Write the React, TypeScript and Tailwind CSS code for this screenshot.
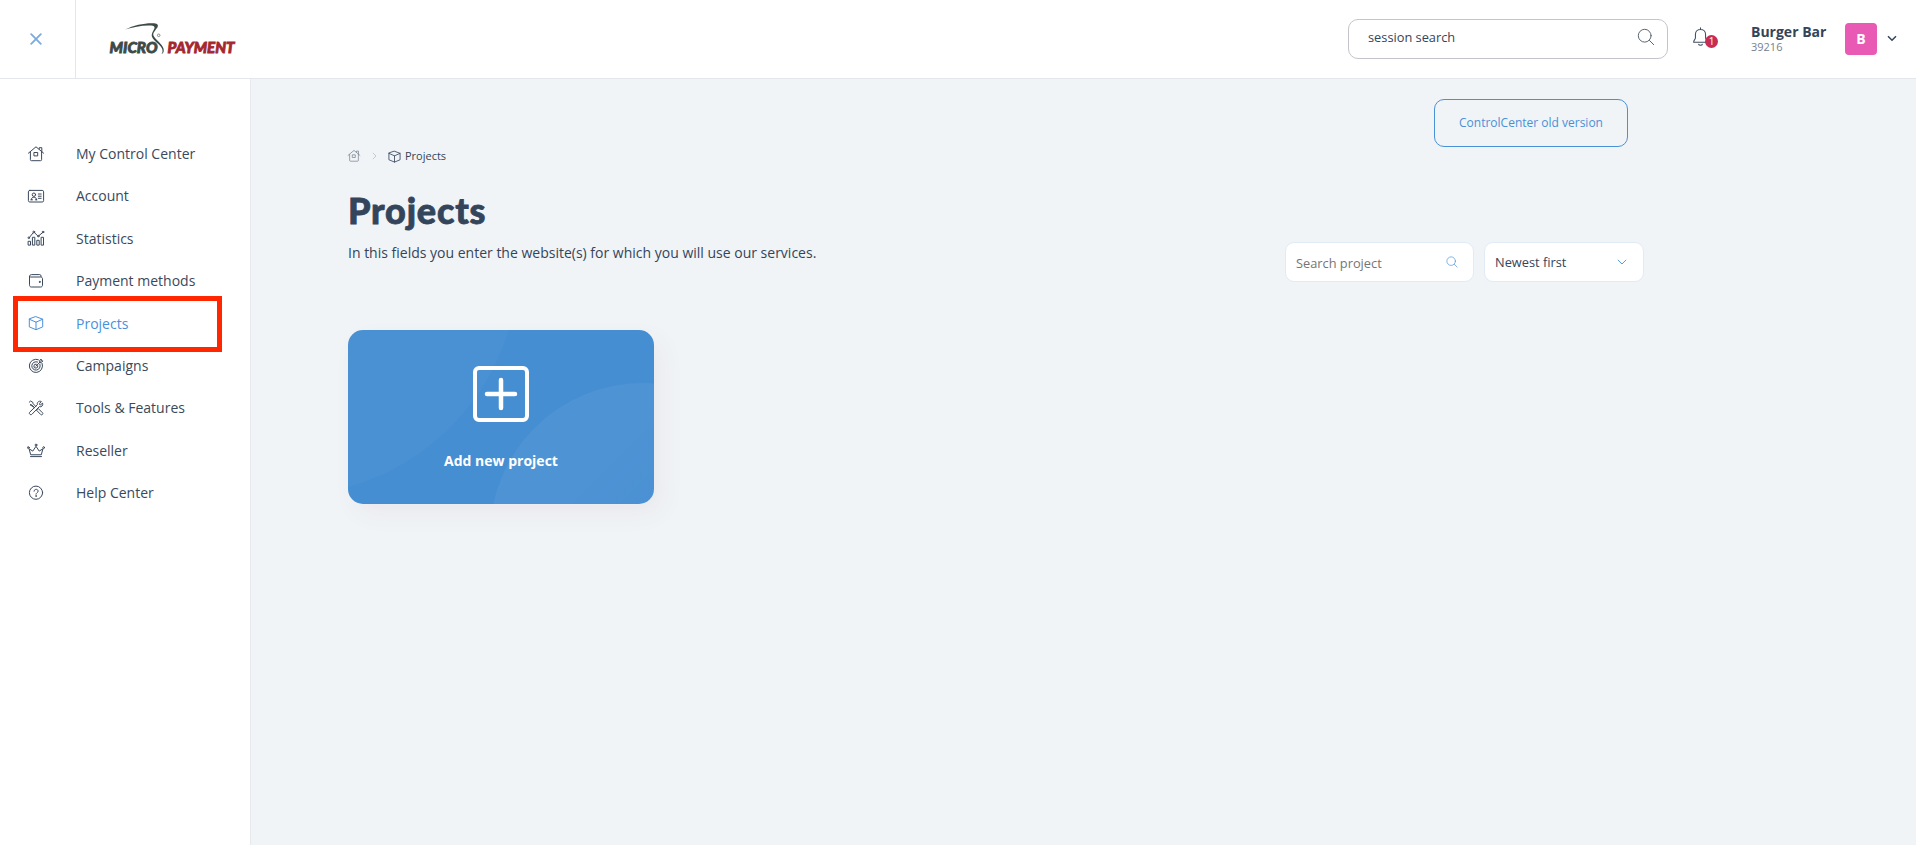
import type { ReactNode } from 'react'

interface IconProps {
  className?: string
  size?: number
  children?: ReactNode
}

interface NavItem {
  label: string
  icon: (props: IconProps) => ReactNode
  active?: boolean
}

function Icon({ className = '', size = 18, children }: IconProps) {
  return (
    <svg
      width={size}
      height={size}
      viewBox="0 0 18 18"
      fill="none"
      stroke="currentColor"
      strokeWidth={1}
      strokeLinecap="round"
      strokeLinejoin="round"
      className={`shrink-0 ${className}`}
    >
      {children}
    </svg>
  )
}

function HomeIcon(props: IconProps) {
  return (
    <Icon {...props}>
      <path d="M1.4 8.2 9 1.8l7.6 6.4" />
      <path d="M3.4 7v7.7a1 1 0 0 0 1 1h9.2a1 1 0 0 0 1-1V7" />
      <path d="M12.2 4V2.700h2.600v4" />
      <rect x="7.3" y="7.5" width="3.4" height="3.4" />
    </Icon>
  )
}

function AccountIcon(props: IconProps) {
  return (
    <Icon {...props}>
      <rect x="1.4" y="3.4" width="15.2" height="11.6" rx="1.4" />
      <circle cx="6.9" cy="7.7" r="1.7" />
      <path d="M4.2 12.8c.2-1.8 1.2-2.6 2.7-2.6s2.5.8 2.7 2.6M4 12.8h1.5M8.3 12.8h1.5" />
      <path d="M11.3 7h2.9M11.3 9.2h2.9M11.3 11.3h2.9" />
    </Icon>
  )
}

function StatisticsIcon(props: IconProps) {
  return (
    <Icon {...props}>
      <path d="M1.5 12.3h2v3.8h-2zM5.8 8.3h2v7.8h-2zM10.2 11.3h2v4.8h-2zM14.5 8.3h2v7.8h-2z" />
      <path d="m2.4 8.4 3.8-4.6M7.6 3.8l3 2.9M12 6.6l3.6-3" />
      <circle cx="1.8" cy="8.8" r=".8" />
      <circle cx="6.8" cy="3" r=".9" />
      <circle cx="11.3" cy="7.1" r=".8" />
      <circle cx="16" cy="3" r=".8" />
    </Icon>
  )
}

function WalletIcon(props: IconProps) {
  return (
    <Icon {...props}>
      <path d="M2.5 4.6c0-1.2.8-2 2-2h8.2c.8 0 1.3.5 1.3 1.3v.6" />
      <path d="M2.5 4.3c0 .5.4.7 1 .7h10.2c1.1 0 1.8.7 1.8 1.8v6.400c0 1.100-.7 1.800-1.800 1.800H4.300c-1.100 0-1.800-.7-1.800-1.800z" />
      <circle cx="12.7" cy="9.9" r=".5" fill="currentColor" />
    </Icon>
  )
}

function CubeIcon(props: IconProps) {
  return (
    <Icon {...props}>
      <path d="M9 2.700 15.700 5.200v7.700L9 15.700l-6.700-2.800V5.200z" />
      <path d="M2.300 5.200 9 8.200l6.700-3M9 8.200v7.500" />
    </Icon>
  )
}

function TargetIcon(props: IconProps) {
  return (
    <Icon {...props}>
      <path d="M11.400 2.700a6.600 6.600 0 1 0 3.700 3.700" />
      <path d="M10.600 5a4.200 4.200 0 1 0 2.300 2.300" />
      <path d="M9.400 7.200a2 2 0 1 0 1.400 1.400" />
      <path d="m9 9.100 4.300-4.300M12.700 5.300V3.500L14.200 2v1.900h1.700l-1.500 1.500z" />
    </Icon>
  )
}

function ToolsIcon(props: IconProps) {
  return (
    <Icon {...props}>
      <path d="M2.200 3.300 3.500 2l2.300 1.300.3 1.400 2.600 2.600M7.400 8.500 4.700 5.900 3.400 5.700z" />
      <path d="m10.400 10.100.9-.5 4.200 4.200c1.100 1.100-.7 2.800-1.800 1.700l-4.100-4.200z" />
      <path d="M12.700 5.300v-1l1.600-1.800c-2.600-1-4.600 1-3.900 3.200l-7.700 7.500c-1.300 1.300.9 3.400 2.200 2.100l7.400-7.600c2.200.6 4.100-1.300 3.300-3.600l-1.800 1.500z" />
    </Icon>
  )
}

function CrownIcon(props: IconProps) {
  return (
    <Icon {...props}>
      <path d="M3.600 13.400 2.100 7.800l3.700 2.300L9 5.300l3.200 4.800 3.700-2.300-1.500 5.600z" />
      <path d="M3.500 15.600h11" />
      <circle cx="1.300" cy="6.600" r=".9" />
      <circle cx="9" cy="4" r=".9" />
      <circle cx="16.700" cy="6.600" r=".9" />
    </Icon>
  )
}

function HelpIcon(props: IconProps) {
  return (
    <Icon {...props}>
      <circle cx="9" cy="8.700" r="6.600" />
      <path d="M7 7.200c0-2.600 4.200-2.500 4.100 0 0 1.500-2.100 1.500-2.100 3" />
      <circle cx="9" cy="12" r=".3" fill="currentColor" />
    </Icon>
  )
}

function SearchIcon(props: IconProps) {
  return (
    <Icon {...props}>
      <circle cx="7.700" cy="7.700" r="6.400" />
      <path d="m12.400 12.400 4.300 4.300" />
    </Icon>
  )
}

function BellIcon(props: IconProps) {
  return (
    <Icon {...props}>
      <path d="M9 .8v1.300M4.200 7c0-6.200 9.600-6.200 9.600 0v3.300c0 1.700 1.700 1.800 1.700 4.200h-13c0-2.400 1.700-2.500 1.700-4.200z" />
      <path d="M7.200 16.300c.3 1.400 3.300 1.400 3.600 0" />
    </Icon>
  )
}

function Logo() {
  return (
    <svg width="128" height="34" viewBox="0 0 128 34" className="shrink-0">
      <path
        d="M16 7.500C25 3 36 .8 45 1.200c4 .3 4.800 2.300 3 4.800-2.200 3-4.700 5.400-3.300 8 2 3.600 8.800 8.500 9.800 12.500.6 2.800.2 4.700-2 5.600 1.300-1.600 1.400-3.600.5-5.600-1.700-4-8.600-7.500-10-11.700-1-3.200 1.300-5.600 2.400-8.400.7-2-.8-2.700-3.400-2.900C34 3 24.500 5 16 7.500z"
        fill="#3c4a48"
      />
      <circle cx="49.700" cy="13.300" r="1.300" fill="none" stroke="#6b7674" strokeWidth=".8" />
      <text x="0.500" y="31" textLength="48" lengthAdjust="spacingAndGlyphs" fill="#3c4a48" stroke="#3c4a48" strokeWidth=".8" className="font-['Lato'] text-[14.500px] font-black italic">
        MICRO
      </text>
      <text x="58.500" y="31" textLength="67" lengthAdjust="spacingAndGlyphs" fill="#a4272f" stroke="#a4272f" strokeWidth=".8" className="font-['Lato'] text-[14.500px] font-black italic">
        PAYMENT
      </text>
    </svg>
  )
}

const navItems: NavItem[] = [
  { label: 'My Control Center', icon: HomeIcon },
  { label: 'Account', icon: AccountIcon },
  { label: 'Statistics', icon: StatisticsIcon },
  { label: 'Payment methods', icon: WalletIcon },
  { label: 'Projects', icon: CubeIcon, active: true },
  { label: 'Campaigns', icon: TargetIcon },
  { label: 'Tools & Features', icon: ToolsIcon },
  { label: 'Reseller', icon: CrownIcon },
  { label: 'Help Center', icon: HelpIcon },
]

function Header() {
  return (
    <header className="flex h-[79px] shrink-0 items-center border-b border-[#e3e6eb] bg-white">
      <button className="flex h-full w-[76px] items-center justify-center border-r border-[#e3e6eb] pr-1 text-[#7aaadf]">
        <svg width="12" height="12" viewBox="0 0 12 12" stroke="currentColor" strokeWidth="1.8" strokeLinecap="round">
          <path d="m1.200 1.200 9.600 9.600M10.800 1.200 1.200 10.800" />
        </svg>
      </button>
      <div className="ml-[33px]">
        <Logo />
      </div>
      <div className="ml-auto flex h-10 w-80 items-center justify-between rounded-[10px] border border-[#c4c5cb] pr-3 pl-[19px] text-[12.8px]">
        <span className="pb-0.5">session search</span>
        <SearchIcon className="mb-1 text-[#5b6673]" />
      </div>
      <div className="relative ml-[23px] text-[#3f4e60]">
        <BellIcon size={19} className="mb-1.5" />
        <span className="absolute top-[8px] left-[14px] flex size-[13px] items-center justify-center rounded-full bg-[#c72c55] text-[10px] leading-none text-white">
          1
        </span>
      </div>
      <div className="ml-[41px] w-[94px] pb-0.5">
        <p className="text-[14px] leading-[17px] font-bold">Burger Bar</p>
        <p className="text-[11px] leading-[13px] text-[#77808c]">39216</p>
      </div>
      <div className="flex size-8 items-center justify-center rounded-[4px] bg-[#e95ab4] pb-0.5 text-[14px] font-bold text-white">B</div>
      <svg width="10" height="7" viewBox="0 0 10 7" fill="none" stroke="#34445a" strokeWidth="1.500" className="mr-[19px] mb-px ml-[10px]">
        <path d="m1 1.200 4 4 4-4" />
      </svg>
    </header>
  )
}

function Sidebar() {
  return (
    <nav className="w-[251px] shrink-0 border-r border-[#e6e9ee] bg-white pt-[53.400px]">
      {navItems.map(({ label, icon: NavIcon, active }) => (
        <a
          key={label}
          className={`relative flex h-[42.4px] items-center gap-[31px] pl-[27px] text-[14px] ${active ? 'text-[#4a90d9]' : 'text-[#3a495c]'}`}
        >
          {active && <span className="absolute top-[-6px] left-[13px] h-14 w-[209px] border-[5px] border-[#ff2600]" />}
          <NavIcon />
          {label}
        </a>
      ))}
    </nav>
  )
}

function AddProjectCard() {
  return (
    <button className="relative flex h-[174px] w-[306px] flex-col items-center overflow-hidden rounded-[15px] bg-[#458ed2] pt-9 text-white">
      <svg width="306" height="174" className="absolute inset-0">
        <defs>
          <linearGradient id="bubble" x1="0" y1="0" x2="1" y2="1">
            <stop offset="0.300" stopColor="#fff" stopOpacity="0.050" />
            <stop offset="0.600" stopColor="#fff" stopOpacity="0.010" />
          </linearGradient>
        </defs>
        <circle cx="-64" cy="-69" r="235" fill="#fff" fillOpacity="0.030" />
        <circle cx="295" cy="206" r="153" fill="url(#bubble)" />
      </svg>
      <svg width="56" height="56" viewBox="0 0 56 56" fill="none" stroke="currentColor" className="relative">
        <rect x="2" y="2" width="52" height="52" rx="4" strokeWidth="4" />
        <path d="M28 14v28M14 28h28" strokeWidth="4.500" strokeLinecap="round" />
      </svg>
      <span className="relative mt-[29px] text-[14px] leading-5 font-bold">Add new project</span>
    </button>
  )
}

export default function App() {
  return (
    <div className="flex h-[845px] flex-col overflow-hidden bg-[#f0f4f7] font-['Open_Sans',sans-serif] text-[#34445a]">
      <Header />
      <div className="flex flex-1">
        <Sidebar />
        <main className="flex-1 pt-5 pl-[97px]">
          <div className="flex w-[1280px] justify-end">
            <button className="flex h-12 w-[194px] items-center justify-center rounded-[10px] border border-[#4a90d6] pb-px text-[12px] text-[#4a90d6]">
              ControlCenter old version
            </button>
          </div>
          <div className="flex h-[18px] items-center text-[11px]">
            <HomeIcon size={14} className="-ml-px text-[#7d8794]" />
            <svg width="5" height="8" viewBox="0 0 5 8" fill="none" stroke="#c3c9d1" className="mr-[10px] ml-[11px]">
              <path d="m.8.800 3.200 3.200L.800 7.200" />
            </svg>
            <CubeIcon size={15} className="mr-[3px]" />
            Projects
          </div>
          <h1 className="mt-[22px] mb-px font-['Lato',sans-serif] text-[36px] leading-[46px] font-black tracking-[0.8px] [-webkit-text-stroke:0.8px_#34445a]">Projects</h1>
          <div className="flex w-[1296px] justify-between">
            <p className="pt-[9px] text-[14px] leading-5">In this fields you enter the website(s) for which you will use our services.</p>
            <div className="mt-2 flex gap-2.5 text-[12.8px]">
              <div className="flex h-10 w-[189px] items-center justify-between rounded-[9px] border border-[#e1ebf6] bg-white pr-[15px] pl-[10px] text-[#757575]">
                <span className="pt-[3px]">Search project</span>
                <SearchIcon size={12} className="text-[#4a90d9]" />
              </div>
              <div className="flex h-10 w-[160px] items-center justify-between rounded-[9px] border border-[#e1ebf6] bg-white pr-4 pl-[10px]">
                <span className="pt-px">Newest first</span>
                <svg width="10" height="6" viewBox="0 0 10 6" fill="none" stroke="#5d9bdd">
                  <path d="m.8.800 4.200 4.200L9.200.800" />
                </svg>
              </div>
            </div>
          </div>
          <div className="mt-12 w-[306px] rounded-[15px] shadow-[8px_10px_24px_rgba(150,60,90,0.060)]">
            <AddProjectCard />
          </div>
        </main>
      </div>
    </div>
  )
}
